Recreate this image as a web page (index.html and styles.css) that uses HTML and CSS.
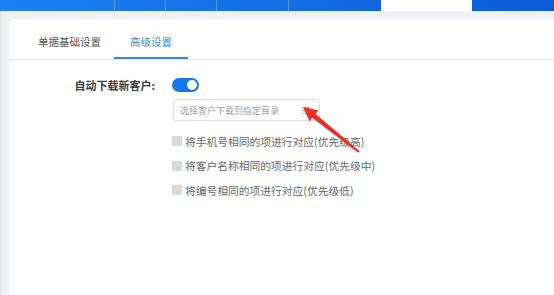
FILE: index.html
```html
<!DOCTYPE html>
<html lang="zh-CN">
<head>
  <meta charset="UTF-8">
  <title>高级设置</title>
  <meta name="viewport" content="width=device-width, initial-scale=1">
  <link rel="stylesheet" href="styles.css">
</head>
<body>
<div class="topbar">
  <div class="seg seg-a"></div>
  <div class="seg seg-b"></div>
  <div class="seg seg-c"></div>
  <div class="seg seg-d"></div>
  <div class="seg seg-e"></div>
  <div class="seg seg-on"></div>
  <div class="seg seg-f"></div>
</div>
<div class="main">
  <div class="card">
    <div class="tabs">
      <div class="tab">单据基础设置</div>
      <div class="tab active">高级设置</div>
    </div>
    <div class="form">
      <div class="row">
        <label class="lbl">自动下载新客户:</label>
        <span class="switch"><span class="knob"></span></span>
      </div>
      <div class="row">
        <span class="lbl"></span>
        <div class="select">
          <span class="ph">选择客户下载到指定目录</span>
          <span class="menu-ico"><i></i><i></i><i></i></span>
        </div>
      </div>
      <div class="checks">
        <label class="check"><span class="box"></span>将手机号相同的项进行对应(优先级高)</label>
        <label class="check"><span class="box"></span>将客户名称相同的项进行对应(优先级中)</label>
        <label class="check"><span class="box"></span>将编号相同的项进行对应(优先级低)</label>
      </div>
    </div>
  </div>
</div>
<!-- 标注箭头 -->
<svg class="mark" width="554" height="295" viewBox="0 0 554 295">
  <polygon fill="#ea2f27" points="303,107 318.5,110.4 315.6,113.9 359.8,151.3 358.2,152.7 312.2,117.7 309.6,121.4"/>
</svg>
</body>
</html>
```

FILE: styles.css
```css
body { margin:0; background:#f0f1f5; font-family:"Noto Sans CJK SC", "Noto Sans", sans-serif; overflow:hidden; height:295px; }
.topbar { display:flex; height:11px; background:linear-gradient(90deg,#1a80f2,#0b5cd5); }
.seg { height:100%; border-left:1px solid rgba(255,255,255,0.28); box-sizing:border-box; }
.seg-a { width:114px; border-left:none; }
.seg-b { width:51px; }
.seg-c { width:51px; }
.seg-d { width:72px; }
.seg-e { width:93px; }
.seg-on { width:91px; background:#fff; border-left:none; }
.seg-f { flex:1; border-left:none; }
.main { padding:8px 0 0 9px; border-left:2px solid #e6e7eb; margin-left:0; }
.card { background:#fff; border-radius:6px 0 0 0; height:290px; margin-left:-2px; }
.tabs { display:flex; border-bottom:1px solid #e6e8ec; height:40px; padding-left:13px; }
.tab { font-size:10.5px; color:#555; line-height:16px; padding:15px 16px 0; height:40px; box-sizing:border-box; }
.tab + .tab { margin-left:-3px; }
.tab.active { color:#3e8ad6; border-bottom:2px solid #3a86d4; }
.form { padding-top:17px; }
.row { display:flex; align-items:center; }
.lbl { width:146px; text-align:right; font-size:11px; color:#3a3a3a; font-weight:bold; margin-right:17px; }
.switch { width:27px; height:14px; border-radius:7px; background:#1677ea; position:relative; }
.knob { position:absolute; right:2px; top:2px; width:10px; height:10px; border-radius:50%; background:#fff; }
.row + .row { margin-top:6px; }
.row .lbl:empty { margin-right:18px; }
.select { width:147px; height:22px; box-sizing:border-box; border:1px solid #dcdfe6; border-radius:3px; display:flex; align-items:center; justify-content:space-between; padding:0 8px 0 6px; }
.ph { font-size:9px; color:#a0a0a8; }
.menu-ico { display:flex; flex-direction:column; gap:2px; width:9px; }
.menu-ico i { display:block; height:1px; background:#b8bcc4; }
.checks { padding-left:163px; padding-top:12px; }
.check { display:flex; align-items:center; height:16px; font-size:10.75px; color:#666; margin-bottom:8.5px; }
.box { width:10px; height:10px; background:#d9d9d9; border-radius:1px; margin-right:3px; }
.mark { position:absolute; left:0; top:0; pointer-events:none; }
```
